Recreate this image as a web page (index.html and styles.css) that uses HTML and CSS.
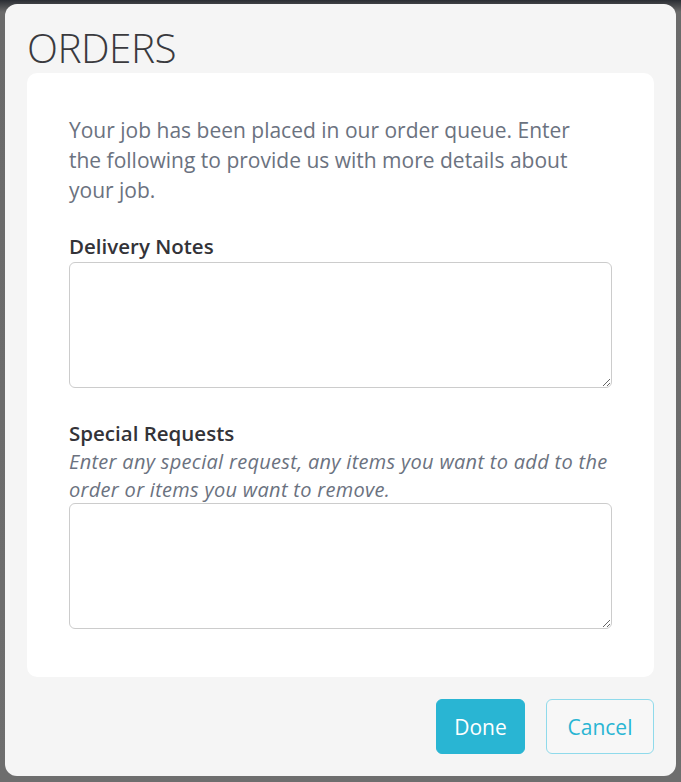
FILE: index.html
```html
<!DOCTYPE html>
<html>
<head>
<meta charset="utf-8">
<link rel="stylesheet" href="styles.css">
</head>
<body>
<div class="backdrop">
  <div class="modal">
    <h1 class="title">ORDERS</h1>
    <div class="card">
      <p class="intro">Your job has been placed in our order queue. Enter the following to provide us with more details about your job.</p>
      <div class="field">
        <label class="label">Delivery Notes</label>
        <textarea class="input"></textarea>
      </div>
      <div class="field field-second">
        <label class="label">Special Requests</label>
        <div class="help">Enter any special request, any items you want to add to the order or items you want to remove.</div>
        <textarea class="input"></textarea>
      </div>
    </div>
    <div class="actions">
      <button class="btn btn-primary">Done</button>
      <button class="btn btn-outline">Cancel</button>
    </div>
  </div>
</div>
</body>
</html>
```
FILE: styles.css
```css
html, body {
  margin: 0;
  padding: 0;
}
body {
  width: 681px;
  height: 782px;
  overflow: hidden;
  font-family: "Open Sans", "Noto Sans", sans-serif;
}
.backdrop {
  height: 782px;
  background: linear-gradient(180deg, #2a2d33 0px, #6a6a6a 12px, #6e6e6e 100%);
  padding: 4px 5px 0 5px;
  box-sizing: border-box;
}
.modal {
  width: 671px;
  height: 772px;
  background: #f5f5f5;
  border-radius: 12px;
  box-sizing: border-box;
  padding: 0 22px;
  display: flex;
  flex-direction: column;
}
.title {
  margin: 0;
  height: 69px;
  font-family: "Open Sans", sans-serif;
  font-weight: 300;
  font-size: 40.5px;
  line-height: 1;
  color: #3a3a3e;
  padding-top: 24px;
  box-sizing: border-box;
  letter-spacing: -0.5px;
}
.card {
  background: #ffffff;
  border-radius: 10px;
  height: 604px;
  box-sizing: border-box;
  padding: 42px 42px 0 42px;
}
.intro {
  margin: 0;
  max-width: 530px;
  font-size: 21px;
  line-height: 30px;
  color: #6b7280;
}
.field {
  margin-top: 26px;
}
.field-second {
  margin-top: 30px;
}
.label {
  display: block;
  font-size: 20.5px;
  font-weight: 600;
  line-height: 30px;
  color: #333338;
}
.help {
  font-size: 20px;
  font-style: italic;
  line-height: 27.5px;
  letter-spacing: 0.3px;
  color: #6b7280;
}
.input {
  display: block;
  width: 100%;
  height: 126px;
  box-sizing: border-box;
  margin-top: 1px;
  border: 1px solid #cccccc;
  border-radius: 6px;
  background: #fff;
  resize: vertical;
  font-family: inherit;
}
.help + .input {
  margin-top: 0;
}
.actions {
  display: flex;
  justify-content: flex-end;
  gap: 21px;
  padding-top: 22px;
}
.btn {
  height: 55px;
  border-radius: 6px;
  font-family: inherit;
  font-size: 21px;
  padding: 0;
  cursor: pointer;
}
.btn-primary {
  background: #29b5d3;
  border: 1px solid #29b5d3;
  color: #ffffff;
  width: 89px;
}
.btn-outline {
  background: #f7f7f7;
  border: 1px solid #8fdaeb;
  color: #29b5d3;
  width: 108px;
}
```
